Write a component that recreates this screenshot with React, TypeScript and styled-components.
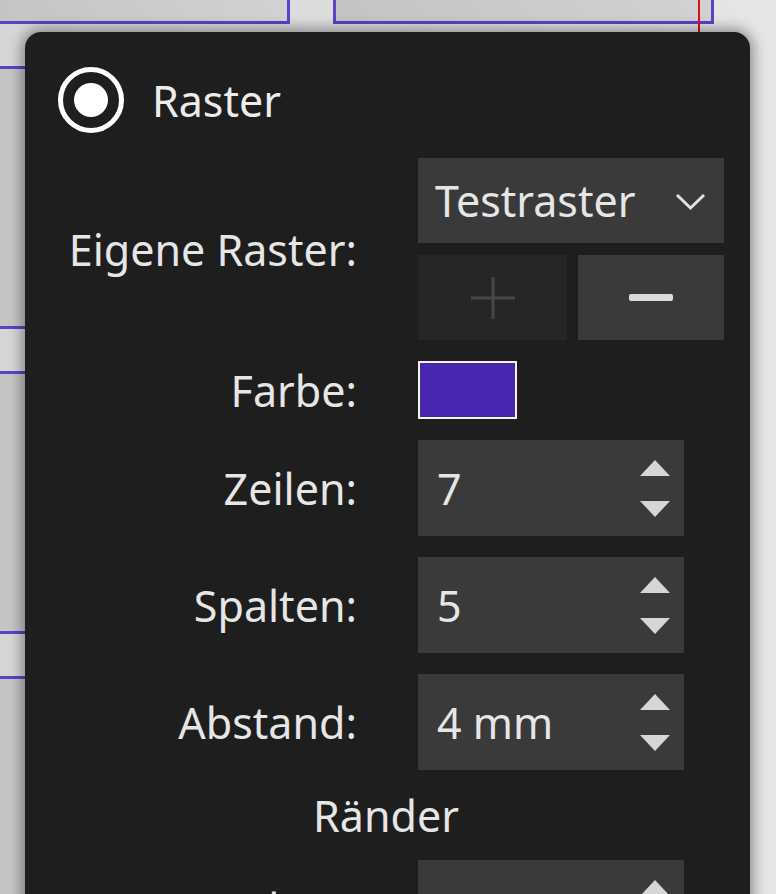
import React from 'react';
import styled, { createGlobalStyle } from 'styled-components';

const GlobalStyle = createGlobalStyle`
  html, body {
    margin: 0;
    padding: 0;
    width: 776px;
    height: 894px;
    overflow: hidden;
    background: #e2e2e2;
  }
`;

const Canvas = styled.div`
  position: relative;
  width: 776px;
  height: 894px;
  overflow: hidden;
  background: linear-gradient(to right, #d6d6d6, #e6e6e6);
  font-family: 'Noto Sans', 'Open Sans', sans-serif;
`;

// pages laid out on the canvas behind the popup
const Page = styled.div`
  position: absolute;
  box-sizing: border-box;
  border: 3px solid #5f40c6;
  background: linear-gradient(to right, #c4c4c4, #d2d2d2);
`;

const MarginGuide = styled.div`
  position: absolute;
  left: 698px;
  top: 0;
  width: 2px;
  height: 40px;
  background: #e01010;
`;

const Popup = styled.div`
  position: absolute;
  left: 25px;
  top: 32px;
  width: 725px;
  height: 900px;
  box-sizing: border-box;
  padding: 35px 26px 0 33px;
  background: #1e1e1e;
  border-radius: 16px 16px 0 0;
  box-shadow: 0 0 14px 3px rgba(0, 0, 0, 0.4);
  color: #e6e6e6;
  font-size: 43px;
`;

const Header = styled.div`
  display: flex;
  align-items: center;
  gap: 28px;
  height: 66px;
  margin-bottom: 25px;
`;

const RadioRing = styled.div`
  width: 66px;
  height: 66px;
  box-sizing: border-box;
  border: 5px solid #ffffff;
  border-radius: 50%;
  display: flex;
  align-items: center;
  justify-content: center;
`;

const RadioDot = styled.div`
  width: 34px;
  height: 34px;
  border-radius: 50%;
  background: #ffffff;
`;

const HeaderLabel = styled.span`
  line-height: 1;
  color: #ececec;
`;

const Form = styled.div`
  display: grid;
  grid-template-columns: 299px 306px;
  column-gap: 61px;
  row-gap: 21px;
  align-items: center;
`;

const Label = styled.div`
  text-align: right;
  white-space: nowrap;
  line-height: 1;
`;

const SectionTitle = styled.div`
  grid-column: 1 / -1;
  height: 48px;
  display: flex;
  align-items: center;
  justify-content: center;
  padding-right: 10px;
  line-height: 1;
`;

const Stack = styled.div`
  display: flex;
  flex-direction: column;
  gap: 12px;
`;

const Select = styled.div`
  height: 85px;
  display: flex;
  align-items: center;
  justify-content: space-between;
  padding: 0 17px;
  background: #3a3a3a;
`;

const ButtonRow = styled.div`
  display: grid;
  grid-template-columns: 149px 146px;
  gap: 11px;
`;

const IconButton = styled.div<{ $disabled?: boolean }>`
  height: 85px;
  display: flex;
  align-items: center;
  justify-content: center;
  background: ${({ $disabled }) => ($disabled ? '#262626' : '#3a3a3a')};
  color: ${({ $disabled }) => ($disabled ? '#474747' : '#dadada')};
`;

const Swatch = styled.div<{ $color: string }>`
  width: 99px;
  height: 58px;
  box-sizing: border-box;
  border: 2px solid #f4f4f4;
  background: ${({ $color }) => $color};
`;

const SpinBox = styled.div`
  width: 266px;
  height: 96px;
  display: flex;
  align-items: center;
  justify-content: space-between;
  padding: 0 14px 0 19px;
  box-sizing: border-box;
  background: #3a3a3a;
`;

const SpinArrows = styled.div`
  display: flex;
  flex-direction: column;
  gap: 25px;
`;

const Chevron = () => (
  <svg width="33" height="20" viewBox="0 0 33 20">
    <polyline points="3,4 16.5,17 30,4" fill="none" stroke="#e2e2e2" strokeWidth="3" />
  </svg>
);

const PlusIcon = () => (
  <svg width="44" height="42" viewBox="0 0 44 42">
    <rect x="0" y="19.5" width="44" height="3" fill="currentColor" />
    <rect x="20.5" y="0" width="3" height="42" fill="currentColor" />
  </svg>
);

const MinusIcon = () => (
  <svg width="44" height="7" viewBox="0 0 44 7">
    <rect x="0" y="0" width="44" height="7" rx="2" fill="currentColor" />
  </svg>
);

const Triangle = ({ down }: { down?: boolean }) => (
  <svg width="30" height="16" viewBox="0 0 30 16">
    <polygon points={down ? '0,0 30,0 15,16' : '15,0 30,16 0,16'} fill="#d6d6d6" />
  </svg>
);

const NumberField = ({ value }: { value: string }) => (
  <SpinBox>
    <span>{value}</span>
    <SpinArrows>
      <Triangle />
      <Triangle down />
    </SpinArrows>
  </SpinBox>
);

export default function App() {
  return (
    <>
      <GlobalStyle />
      <Canvas>
        <Page style={{ left: -20, top: -240, width: 310, height: 264 }} />
        <Page style={{ left: 333, top: -240, width: 381, height: 264 }} />
        <Page style={{ left: -20, top: 66, width: 310, height: 263 }} />
        <Page style={{ left: -20, top: 371, width: 310, height: 263 }} />
        <Page style={{ left: -20, top: 676, width: 310, height: 263 }} />
        <MarginGuide />

        <Popup>
          <Header>
            <RadioRing>
              <RadioDot />
            </RadioRing>
            <HeaderLabel>Raster</HeaderLabel>
          </Header>

          <Form>
            <Label>Eigene Raster:</Label>
            <Stack>
              <Select>
                <span>Testraster</span>
                <Chevron />
              </Select>
              <ButtonRow>
                <IconButton $disabled>
                  <PlusIcon />
                </IconButton>
                <IconButton>
                  <MinusIcon />
                </IconButton>
              </ButtonRow>
            </Stack>

            <Label>Farbe:</Label>
            <Swatch $color="#4a25b0" />

            <Label>Zeilen:</Label>
            <NumberField value="7" />

            <Label>Spalten:</Label>
            <NumberField value="5" />

            <Label>Abstand:</Label>
            <NumberField value="4 mm" />

            <SectionTitle>Ränder</SectionTitle>

            <Label>Oben:</Label>
            <NumberField value="" />
          </Form>
        </Popup>
      </Canvas>
    </>
  );
}
